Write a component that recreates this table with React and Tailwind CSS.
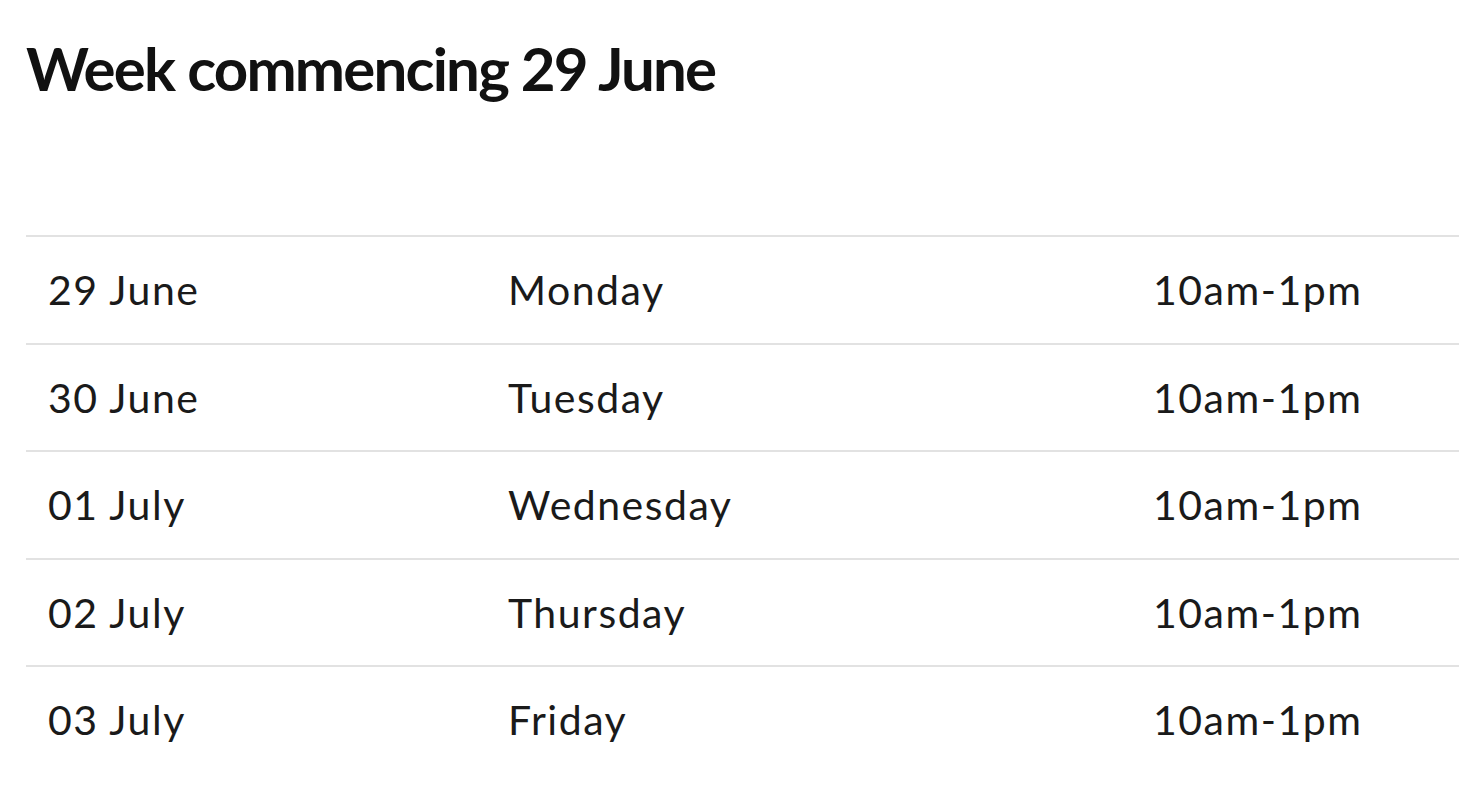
// Week schedule table
const rows = [
    { date: '29 June', day: 'Monday', time: '10am-1pm' },
    { date: '30 June', day: 'Tuesday', time: '10am-1pm' },
    { date: '01 July', day: 'Wednesday', time: '10am-1pm' },
    { date: '02 July', day: 'Thursday', time: '10am-1pm' },
    { date: '03 July', day: 'Friday', time: '10am-1pm' },
];

export default function App() {
    return (
        <div className="min-h-screen bg-white font-['Lato',sans-serif] text-[#1a1a1a] pl-[26px]">
            <h1 className="pt-[32px] text-[60px] leading-[1.2] font-bold text-[#111] tracking-[-1.8px]">
                Week commencing 29 June
            </h1>
            <div className="mt-[131px]">
                {rows.map((row) => (
                    <div
                        key={row.date}
                        className="grid grid-cols-[460px_645px_1fr] h-[107.5px] items-center border-t-2 border-[#e2e2e2] text-[41px] tracking-[1.5px]"
                    >
                        <div className="pl-[22px]">{row.date}</div>
                        <div className="pl-[22px]">{row.day}</div>
                        <div className="pl-[22px]">{row.time}</div>
                    </div>
                ))}
            </div>
        </div>
    );
}
